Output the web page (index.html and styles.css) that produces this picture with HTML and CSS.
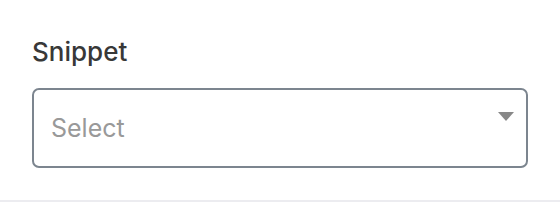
FILE: index.html
```html
<!DOCTYPE html>
<html lang="en">
<head>
    <meta charset="UTF-8">
    <meta name="viewport" content="width=device-width, initial-scale=1.0">
    <title>Snippet</title>
    <link rel="stylesheet" href="styles.css">
</head>
<body>
<div class="field">
    <label class="field-label" for="snippet">Snippet</label>
    <!-- Custom select box -->
    <div class="select-box" id="snippet">
        <span class="placeholder">Select</span>
        <svg class="caret" width="16" height="9" viewBox="0 0 16 9">
            <path d="M0 0 H16 L8 9 Z" fill="#888"/>
        </svg>
    </div>
</div>
</body>
</html>
```
FILE: styles.css
```css
body {
    margin: 0;
    font-family: Inter, "Noto Sans", Arial, sans-serif;
    background-color: #fff;
    color: #333;
}

.field {
    height: 202px;
    padding: 36px 32px 0;
    box-sizing: border-box;
    border-bottom: 2px solid #ececf0;
}

.field-label {
    display: block;
    font-size: 26px;
    line-height: 32px;
    font-weight: 500;
    color: #383838;
    margin-bottom: 20px;
}

.select-box {
    height: 80px;
    box-sizing: border-box;
    border: 2px solid #7c858f;
    border-radius: 7px;
    display: flex;
    align-items: center;
    justify-content: space-between;
    padding: 0 12px 0 17px;
    cursor: pointer;
}

.placeholder {
    font-size: 25px;
    color: #999;
}

.caret {
    align-self: flex-start;
    margin-top: 22px;
}
```
